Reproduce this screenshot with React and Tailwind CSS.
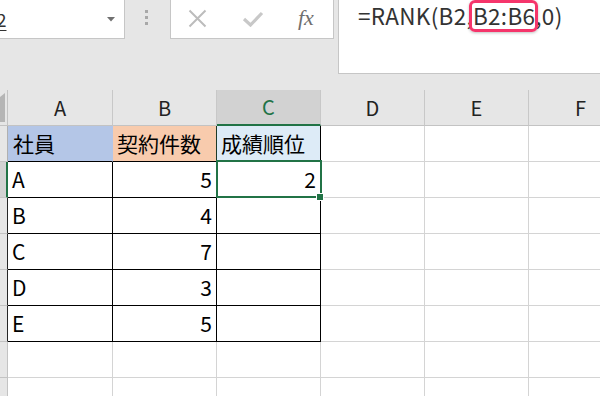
import React from "react";

const FONT = { fontFamily: '"Noto Sans CJK JP", "Noto Sans", sans-serif' };

function HeaderCell({ label, selected, wide }) {
  return (
    <div
      className={
        "shrink-0 h-[36px] box-border border-r border-r-[#c8c8c8] flex items-center justify-center text-[20px] " +
        (wide ? "w-[105px] " : "w-[104px] ") +
        (selected
          ? "bg-[#d2d2d2] text-[#217346] border-b-2 border-b-[#217346]"
          : "bg-[#e6e6e6] text-[#222] border-b border-b-[#c3c3c3]")
      }
    >
      {label}
    </div>
  );
}

function Cell({ children, cls }) {
  return (
    <div
      className={
        "shrink-0 h-[36px] box-border border-r border-b flex items-center text-[21px] text-black " +
        cls
      }
    >
      {children}
    </div>
  );
}

export default function App() {
  const rows = [
    ["B", "4"],
    ["C", "7"],
    ["D", "3"],
    ["E", "5"],
  ];
  const emptyCols = [0, 1, 2];
  return (
    <div className="w-[600px] h-[396px] bg-[#e6e6e6] overflow-hidden relative" style={FONT}>
      {/* Top toolbar */}
      <div className="flex items-start h-[90px]">
        {/* Name box */}
        <div className="w-[125px] h-[39px] shrink-0 bg-white border-r border-b border-[#c6c6c6] flex items-center justify-between pr-[9px] box-border overflow-hidden">
          <span className="text-[18px] text-[#333] ml-[-15px] underline underline-offset-[3px] decoration-1 leading-none">
            C2
          </span>
          <svg width="8" height="5" viewBox="0 0 8 5">
            <polygon points="0,0 8,0 4,4.5" fill="#707070" />
          </svg>
        </div>
        {/* Dots */}
        <div className="w-[45px] h-[39px] shrink-0 flex justify-center pt-[10px]">
          <div className="flex flex-col gap-[3px] ml-[-3px]">
            <div className="w-[3px] h-[3px] bg-[#a8a8a8]" />
            <div className="w-[3px] h-[3px] bg-[#a8a8a8]" />
            <div className="w-[3px] h-[3px] bg-[#a8a8a8]" />
          </div>
        </div>
        {/* Buttons box */}
        <div className="w-[164px] h-[39px] shrink-0 bg-white border-l border-r border-b border-[#c6c6c6] box-border relative flex items-center">
          <svg className="absolute left-[17px] top-[9px]" width="19" height="19" viewBox="0 0 19 19">
            <path d="M1.5 1.5 L17.5 17.5 M17.5 1.5 L1.5 17.5" stroke="#bcbcbc" strokeWidth="2" fill="none" />
          </svg>
          <svg className="absolute left-[71px] top-[11px]" width="22" height="16" viewBox="0 0 22 16">
            <path d="M2 8 L8.5 14 L20 2" stroke="#c8c8c8" strokeWidth="3.2" fill="none" />
          </svg>
          <span
            className="absolute left-[127px] top-[3px] text-[22px] italic text-[#6f6f6f] leading-[30px]"
            style={{ fontFamily: '"Liberation Serif", "DejaVu Serif", serif' }}
          >
            fx
          </span>
        </div>
        <div className="w-[4px] shrink-0" />
        {/* Formula bar */}
        <div className="flex-1 h-[74px] bg-white border-l border-b border-[#c6c6c6] box-border pl-[19px]">
          <div className="text-[22.5px] text-[#333] leading-[32px] whitespace-nowrap tracking-[0.3px] mt-[-1px]">
            =RANK(B2,
            <span className="relative">
              B2:B6
              <span className="absolute left-[-4px] right-[-3px] top-[1px] bottom-[-1px] border-[3px] border-[#f5356b] rounded-[6px] shadow-[0_1px_3px_rgba(0,0,0,0.25)]" />
            </span>
            ,0)
          </div>
        </div>
      </div>

      {/* Grid */}
      <div className="relative">
        {/* Column header row */}
        <div className="flex">
          <div className="w-[8px] h-[36px] shrink-0 bg-[#e6e6e6] border-r border-b border-[#c3c3c3] box-border relative">
            <svg className="absolute left-0 top-0" width="7" height="35" viewBox="0 0 7 35">
              <polygon points="0,7 5,3 5,32 0,32" fill="#b5b5b5" />
            </svg>
          </div>
          <HeaderCell label="A" wide />
          <HeaderCell label="B" />
          <HeaderCell label="C" selected />
          <HeaderCell label="D" />
          <HeaderCell label="E" />
          <HeaderCell label="F" />
        </div>

        {/* Row 1 */}
        <div className="flex">
          <div className="w-[8px] h-[36px] shrink-0 bg-[#e6e6e6] border-r border-b border-r-[#b0b0b0] border-b-[#c3c3c3] box-border" />
          <Cell cls="w-[105px] bg-[#b4c6e7] border-r-[#b4c6e7] border-b-black pl-[5px]">社員</Cell>
          <Cell cls="w-[104px] bg-[#f8cbad] border-r-[#1d3b2a] border-b-black pl-[4px]">契約件数</Cell>
          <Cell cls="w-[104px] bg-[#ddebf7] border-r-black border-b-black pl-[4px]">成績順位</Cell>
          {emptyCols.map((i) => (
            <Cell key={i} cls="w-[104px] bg-white border-[#d4d4d4]" />
          ))}
        </div>

        {/* Row 2 (selected) */}
        <div className="flex">
          <div className="w-[8px] h-[36px] shrink-0 bg-[#d2d2d2] border-r-2 border-b border-r-[#217346] border-b-[#c3c3c3] box-border" />
          <Cell cls="w-[105px] bg-white border-black pl-[4px]">A</Cell>
          <Cell cls="w-[104px] bg-white border-black justify-end pr-[4px]">5</Cell>
          <Cell cls="w-[104px] bg-white border-black justify-end pr-[4px]">2</Cell>
          {emptyCols.map((i) => (
            <Cell key={i} cls="w-[104px] bg-white border-[#d4d4d4]" />
          ))}
        </div>

        {rows.map(([a, b]) => (
          <div className="flex" key={a}>
            <div className="w-[8px] h-[36px] shrink-0 bg-[#e6e6e6] border-r border-b border-r-[#262626] border-b-[#c3c3c3] box-border" />
            <Cell cls="w-[105px] bg-white border-black pl-[4px]">{a}</Cell>
            <Cell cls="w-[104px] bg-white border-black justify-end pr-[4px]">{b}</Cell>
            <Cell cls="w-[104px] bg-white border-black" />
            {emptyCols.map((i) => (
              <Cell key={i} cls="w-[104px] bg-white border-[#d4d4d4]" />
            ))}
          </div>
        ))}

        {[7, 8].map((r) => (
          <div className="flex" key={r}>
            <div className="w-[8px] h-[36px] shrink-0 bg-[#e6e6e6] border-r border-b border-[#c3c3c3] box-border" />
            <Cell cls="w-[105px] bg-white border-[#d4d4d4]" />
            <Cell cls="w-[104px] bg-white border-[#d4d4d4]" />
            <Cell cls="w-[104px] bg-white border-[#d4d4d4]" />
            {emptyCols.map((i) => (
              <Cell key={i} cls="w-[104px] bg-white border-[#d4d4d4]" />
            ))}
          </div>
        ))}

        {/* Selection overlay for C2 */}
        <div className="absolute left-[216px] top-[70px] w-[106px] h-[38px] border-2 border-[#217346] pointer-events-none" />
        <div className="absolute left-[316px] top-[103px] w-[8px] h-[8px] bg-[#217346] border border-white pointer-events-none" />
      </div>
    </div>
  );
}
